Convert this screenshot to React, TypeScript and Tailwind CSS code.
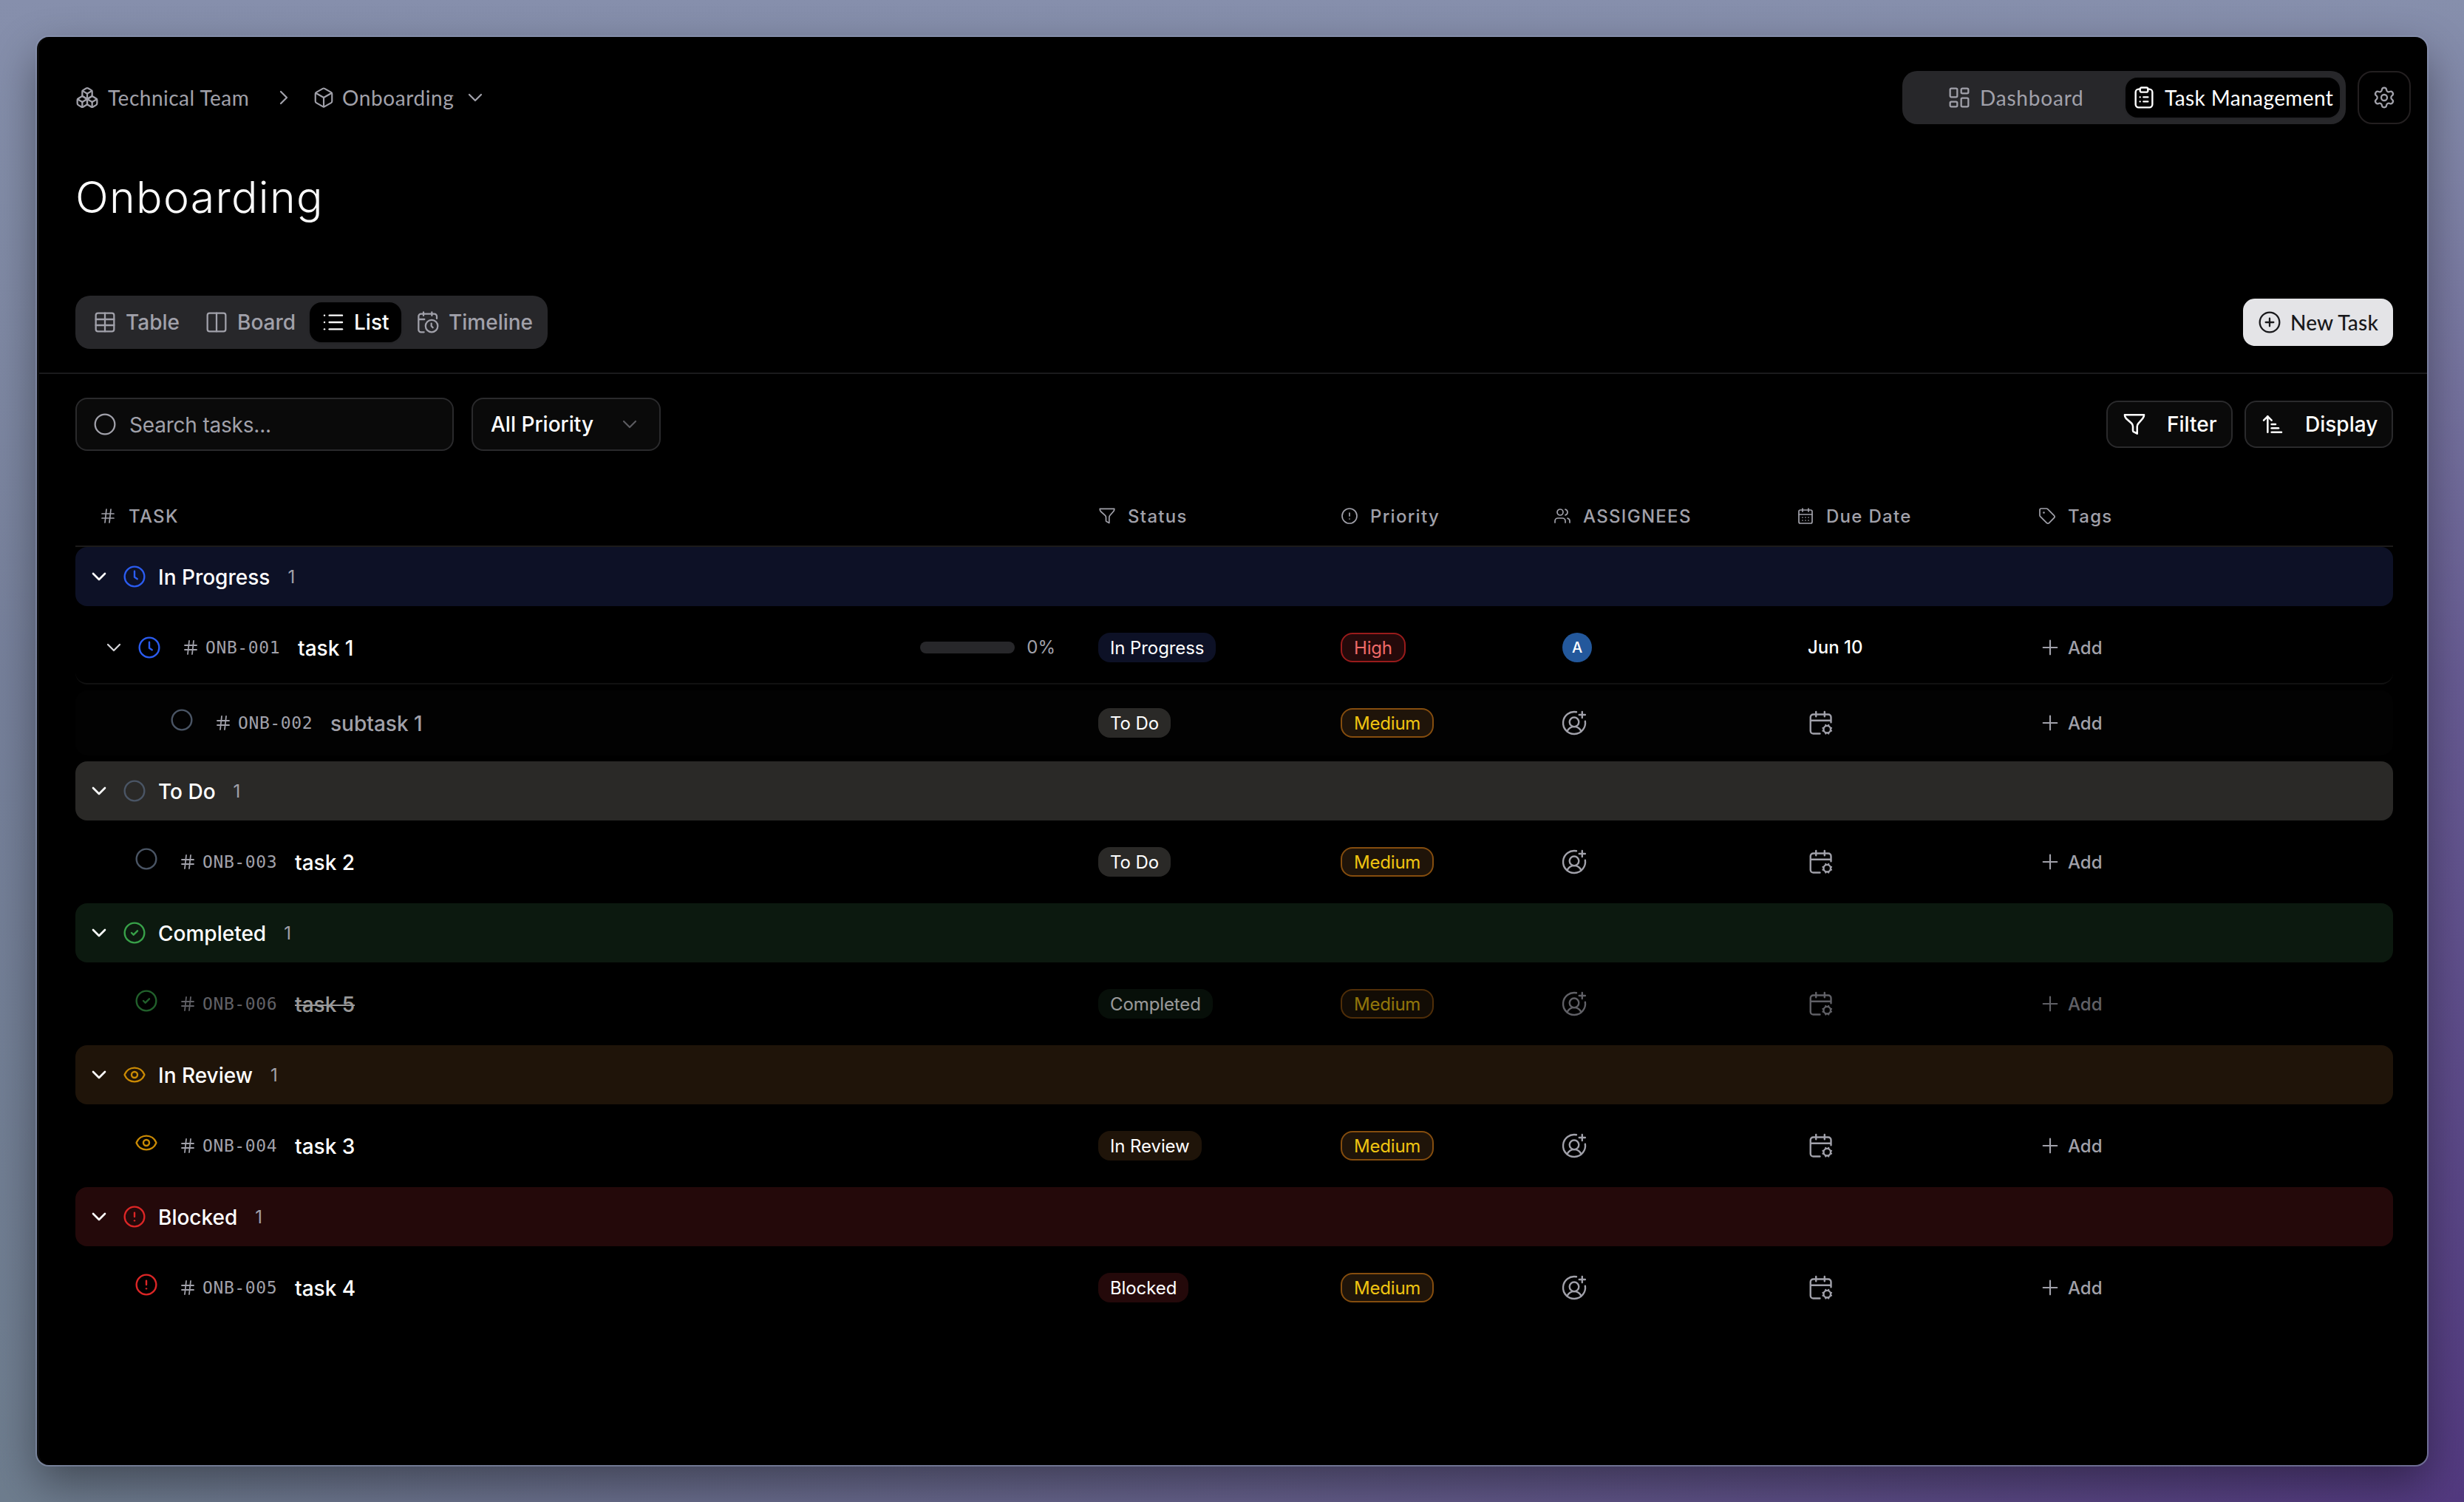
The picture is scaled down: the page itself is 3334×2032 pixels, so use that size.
import React from "react";
import {
  ArrowUpNarrowWide,
  Box,
  Boxes,
  CalendarDays,
  ChevronDown,
  ChevronRight,
  CircleAlert,
  CircleCheck,
  CirclePlus,
  Eye,
  Hash,
  List,
  Plus,
  Settings,
  Tag,
  Users,
} from "lucide-react";

type IconProps = { size?: number; strokeWidth?: number; className?: string };
type IconType = React.ComponentType<IconProps>;

const Svg = ({ size = 32, strokeWidth = 1.7, className, children }: IconProps & { children: React.ReactNode }) => (
  <svg
    width={size}
    height={size}
    viewBox="0 0 24 24"
    fill="none"
    stroke="currentColor"
    strokeWidth={strokeWidth}
    strokeLinecap="round"
    strokeLinejoin="round"
    className={className}
  >
    {children}
  </svg>
);

const DashboardIcon: IconType = (p) => (
  <Svg {...p}>
    <rect x="2.75" y="2.75" width="7.25" height="8.75" rx="1.2" />
    <rect x="14" y="2.75" width="7.25" height="5" rx="1.2" />
    <rect x="2.75" y="16.25" width="7.25" height="5" rx="1.2" />
    <rect x="14" y="12.5" width="7.25" height="8.75" rx="1.2" />
  </Svg>
);

const ClipboardIcon: IconType = (p) => (
  <Svg {...p}>
    <path d="M16 3.5h1.5a3 3 0 0 1 3 3V19a3 3 0 0 1-3 3h-11a3 3 0 0 1-3-3V6.5a3 3 0 0 1 3-3H8" />
    <rect x="8" y="1.9" width="8" height="4.6" rx="1.5" />
    <path d="M8 11.5h.01M11.5 11.5H16M8 16h.01M11.5 16H16" />
  </Svg>
);

const TableIcon: IconType = (p) => (
  <Svg {...p}>
    <rect x="2.75" y="2.75" width="18.5" height="18.5" rx="2.2" />
    <path d="M2.75 9h18.5M2.75 15h18.5M12 2.75v18.5" />
  </Svg>
);

const BoardIcon: IconType = (p) => (
  <Svg {...p}>
    <rect x="2.75" y="2.75" width="18.5" height="18.5" rx="2.2" />
    <path d="M12 2.75v18.5" />
  </Svg>
);

const TimelineIcon: IconType = (p) => (
  <Svg {...p}>
    <path d="M7.5 1.8v3.4M16 1.8v3.4M21 8.2V6a2.5 2.5 0 0 0-2.5-2.5H5A2.5 2.5 0 0 0 2.5 6v13.5A2.5 2.5 0 0 0 5 22h3M2.5 9h6" />
    <circle cx="15.8" cy="15.8" r="6.2" />
    <path d="M15.5 13.2v2.6l1.5 1.6" />
  </Svg>
);

const FunnelIcon: IconType = (p) => (
  <Svg {...p}>
    <path d="M2.2 2.4h19.6c0 1.6-.3 2.4-1.3 3.6l-4.6 5.3c-.9 1-1.1 1.8-1.1 3v7.2l-3.6-1.9c-.5-.3-.7-.7-.7-1.3v-4c0-1.2-.2-2-1.1-3L3.5 6c-1-1.2-1.3-2-1.3-3.6Z" />
  </Svg>
);

const CircleIcon: IconType = (p) => (
  <Svg {...p}>
    <circle cx="12" cy="12" r="10" />
  </Svg>
);

const ClockIcon: IconType = (p) => (
  <Svg {...p}>
    <circle cx="12" cy="12" r="10" />
    <path d="M12 6.5v6l2.8 2" />
  </Svg>
);

const AssignIcon: IconType = (p) => (
  <Svg {...p}>
    <path d="M14 2.2A10 10 0 1 0 21.900 10.500" />
    <path d="M19.200 2v5.400M16.500 4.700h5.400" />
    <circle cx="12" cy="11.200" r="4.200" />
    <path d="M5.600 19.600c1.200-2.600 3.500-4.200 6.400-4.200s5.200 1.600 6.400 4.200" />
  </Svg>
);

const CalendarSettingIcon: IconType = (p) => (
  <Svg {...p}>
    <path d="M7.500 2v4.200M15.200 2v4.200" />
    <path d="M21 11.500V6.800A2.500 2.500 0 0 0 18.500 4.300H5A2.500 2.500 0 0 0 2.500 6.800v12.400A2.500 2.500 0 0 0 5 21.700h6M2.500 9.800H21" />
    <circle cx="17.500" cy="17.800" r="3.200" />
    <path
      d="M16.200 13.900v.4M18.800 13.900v.4M16.200 21.300v.4M18.800 21.300v.4M21.300 16.500v.1M21.300 19.100v.1M13.700 16.500v.1M13.700 19.100v.1"
      strokeWidth="1.500"
    />
  </Svg>
);

type Task = {
  id: string;
  title: string;
  priority: "High" | "Medium";
  date?: string;
  assignee?: string;
  progress?: string;
  subtask?: boolean;
};

type Group = { status: string; bg: string; color: string; icon: IconType; tasks: Task[] };

const groups: Group[] = [
  {
    status: "In Progress",
    bg: "bg-[#0d1126]",
    color: "text-[#2b5cf0]",
    icon: ClockIcon,
    tasks: [
      { id: "ONB-001", title: "task 1", priority: "High", date: "Jun 10", assignee: "A", progress: "0%" },
      { id: "ONB-002", title: "subtask 1", priority: "Medium", subtask: true },
    ],
  },
  {
    status: "To Do",
    bg: "bg-[#2a2927]",
    color: "text-[#4a5565]",
    icon: CircleIcon,
    tasks: [{ id: "ONB-003", title: "task 2", priority: "Medium" }],
  },
  {
    status: "Completed",
    bg: "bg-[#0c190f]",
    color: "text-[#38a149]",
    icon: CircleCheck,
    tasks: [{ id: "ONB-006", title: "task 5", priority: "Medium" }],
  },
  {
    status: "In Review",
    bg: "bg-[#1f1409]",
    color: "text-[#ca8a04]",
    icon: Eye,
    tasks: [{ id: "ONB-004", title: "task 3", priority: "Medium" }],
  },
  {
    status: "Blocked",
    bg: "bg-[#24090a]",
    color: "text-[#dc2626]",
    icon: CircleAlert,
    tasks: [{ id: "ONB-005", title: "task 4", priority: "Medium" }],
  },
];

const COLS = "grid grid-cols-[1384px_328px_288px_329px_327px_1fr] items-center";

const Header = () => (
  <header className="flex h-[72px] items-center justify-between pl-[52px] pr-[22px]">
    <nav className="flex items-center font-[Lato] text-[28px] text-[#a1a1aa]">
      <Boxes size={32} strokeWidth={1.7} />
      <span className="ml-[12px] w-[191px] whitespace-nowrap tracking-[0.5px]">Technical Team</span>
      <ChevronRight size={32} strokeWidth={1.7} className="ml-[31px]" />
      <Box size={30} strokeWidth={1.7} className="ml-[23px]" />
      <span className="ml-[10px] w-[150px] whitespace-nowrap tracking-[0.6px]">Onboarding</span>
      <ChevronDown size={32} strokeWidth={1.7} className="ml-[14px]" />
    </nav>
    <div className="flex items-center gap-4">
      <div className="flex h-[72px] w-[600px] items-center rounded-[20px] bg-[#27272a] pr-2 font-[Lato] text-[28px]">
        <div className="flex flex-1 items-center pl-[61px] text-[#a1a1aa]">
          <DashboardIcon size={32} />
          <span className="ml-[12px] whitespace-nowrap tracking-[0.8px]">Dashboard</span>
        </div>
        <div className="flex h-[54px] w-[290px] items-center rounded-2xl bg-black pl-[9px] text-white shadow-sm">
          <ClipboardIcon size={32} strokeWidth={1.8} />
          <span className="ml-[12px] whitespace-nowrap tracking-[0.4px]">Task Management</span>
        </div>
      </div>
      <button className="flex size-[72px] items-center justify-center rounded-[20px] border-2 border-[#231f20] text-[#a1a1aa]">
        <Settings size={32} strokeWidth={1.7} />
      </button>
    </div>
  </header>
);

const Tabs = () => (
  <div className="flex items-center justify-between pl-[52px] pr-[46px]">
    <div className="flex h-[72px] w-[639px] items-center rounded-[20px] bg-[#27272a] text-[28px] font-[470] text-[#a1a1aa]">
      <div className="flex w-[152px] items-center gap-3 pl-[24px]">
        <TableIcon size={32} />
        Table
      </div>
      <div className="flex w-[165px] items-center gap-3 pl-[23px]">
        <BoardIcon size={32} />
        Board
      </div>
      <div className="flex h-[54px] w-[124px] items-center gap-3 rounded-2xl bg-black pl-4 text-white shadow-sm">
        <List size={32} strokeWidth={1.8} />
        List
      </div>
      <div className="flex items-center gap-3 pl-[20px]">
        <TimelineIcon size={32} />
        Timeline
      </div>
    </div>
    <button className="flex h-16 w-[203px] items-center gap-3 rounded-2xl bg-[#e4e4e7] pl-5 font-[Lato] text-[28px] font-medium text-[#18181b]">
      <CirclePlus size={32} strokeWidth={1.7} />
      <span className="whitespace-nowrap tracking-[0.2px]">New Task</span>
    </button>
  </div>
);

const Toolbar = () => (
  <div className="flex items-center justify-between pl-[52px] pr-[46px] text-[28px]">
    <div className="flex gap-6">
      <div className="flex h-[72px] w-[512px] items-center gap-[17px] rounded-2xl border-2 border-[#2a2a2c] bg-[#0a0a0a] pl-[22px] text-[#a1a1aa]">
        <CircleIcon size={32} />
        <span className="pt-0.5 tracking-[-0.2px]">Search tasks...</span>
      </div>
      <div className="flex h-[72px] w-[256px] items-center justify-between rounded-2xl border-2 border-[#2a2a2c] bg-[#0a0a0a] pl-6 pr-[24px] font-[470] text-white">
        All Priority
        <ChevronDown size={32} strokeWidth={1.6} className="text-[#5b5b60]" />
      </div>
    </div>
    <div className="flex gap-4 font-[480] text-white">
      <button className="flex h-16 w-[171px] items-center gap-7 rounded-2xl border-2 border-[#2a2a2c] bg-[#0a0a0a] pl-5">
        <FunnelIcon size={32} strokeWidth={1.9} />
        Filter
      </button>
      <button className="flex h-16 w-[201px] items-center gap-7 rounded-2xl border-2 border-[#2a2a2c] bg-[#0a0a0a] pl-5">
        <ArrowUpNarrowWide size={32} strokeWidth={1.9} />
        Display
      </button>
    </div>
  </div>
);

const columns: { label: string; icon: IconType }[] = [
  { label: "TASK", icon: Hash },
  { label: "Status", icon: FunnelIcon },
  { label: "Priority", icon: CircleAlert },
  { label: "ASSIGNEES", icon: Users },
  { label: "Due Date", icon: CalendarDays },
  { label: "Tags", icon: Tag },
];

const TableHead = () => (
  <div className={COLS + " h-[82px] border-b-2 border-[#1c1b1a] text-[24px] font-[450] tracking-[1.3px] text-[#a1a1aa]"}>
    {columns.map(({ label, icon: Icon }, i) => (
      <div key={label} className={"flex items-center gap-4" + (i === 0 ? " pl-8" : "")}>
        <Icon size={24} strokeWidth={1.7} />
        <span className="pt-0.5">{label}</span>
      </div>
    ))}
  </div>
);

const PriorityPill = ({ value }: { value: Task["priority"] }) => {
  const tone =
    value === "High"
      ? "border-[#991b1b] bg-[#24090a] text-[#ef6a68]"
      : "border-[#854d0e] bg-[#1f1409] text-[#f0c411]";
  return (
    <span className={"flex h-10 items-center rounded-2xl border-2 px-4 pt-0.5 text-[24px] font-[440] tracking-[-0.2px] " + tone}>
      {value}
    </span>
  );
};

const TaskRow = ({ task, group }: { task: Task; group: Group }) => {
  // subtasks keep their own "To Do" status inside the parent's group
  const look = task.subtask ? groups[1] : group;
  const Icon = look.icon;
  const done = group.status === "Completed";

  let rowClass = "h-[112px]";
  let iconClass = "ml-[80px] mb-2";
  if (task.progress) {
    rowClass = "my-2 h-[98px] rounded-2xl border-b-2 border-[#111111]";
    iconClass = "ml-4";
  }
  if (task.subtask) {
    rowClass = "mb-2 h-[88px] rounded-2xl bg-[#020202]";
    iconClass = "ml-[128px] mb-2";
  }

  return (
    <div className={COLS + " " + rowClass + (done ? " opacity-60" : "")}>
      <div className="flex items-center pr-[58px]">
        {task.progress && <ChevronDown size={32} strokeWidth={1.7} className="ml-9 text-[#d4d4d8]" />}
        <span className={look.color + " " + iconClass}>
          <Icon size={32} strokeWidth={1.8} />
        </span>
        <span className="ml-7 flex items-center text-[#a1a1aa]">
          <Hash size={24} strokeWidth={1.8} />
          <span className="ml-2 w-[125px] font-['DejaVu_Sans_Mono',monospace] text-[23px] tracking-[0.6px]">
            {task.id}
          </span>
        </span>
        <span
          className={
            "pt-0.5 text-[28px] font-[470] " + (task.subtask ? "text-[#a1a1aa]" : "text-white") + (done ? " line-through" : "")
          }
        >
          {task.title}
        </span>
        {task.progress && (
          <span className="ml-auto flex items-center gap-4 text-[24px] text-[#a1a1aa]">
            <span className="h-4 w-32 rounded-full bg-[#27272a]" />
            {task.progress}
          </span>
        )}
      </div>
      <div className="flex">
        <span
          className={
            "flex h-10 items-center rounded-2xl px-4 pt-0.5 text-[24px] font-[440] tracking-[-0.1px] text-white " + look.bg
          }
        >
          {look.status}
        </span>
      </div>
      <div className="flex">
        <PriorityPill value={task.priority} />
      </div>
      <div className="flex pl-[10px]">
        {task.assignee ? (
          <span className="ml-0.5 flex size-10 items-center justify-center rounded-full bg-[#23589c] text-[20px] font-medium text-white">
            {task.assignee}
          </span>
        ) : (
          <AssignIcon size={36} strokeWidth={1.6} className="text-[#a1a1aa]" />
        )}
      </div>
      <div className="pl-[15px]">
        {task.date ? (
          <span className="text-[24px] font-[450] text-white">{task.date}</span>
        ) : (
          <CalendarSettingIcon size={36} strokeWidth={1.6} className="text-[#a1a1aa]" />
        )}
      </div>
      <div className="flex items-center gap-2 text-[24px] font-[450] text-[#a1a1aa]">
        <Plus size={32} strokeWidth={1.6} />
        <span className="pt-0.5">Add</span>
      </div>
    </div>
  );
};

const TaskGroup = ({ group }: { group: Group }) => {
  const Icon = group.icon;
  return (
    <section>
      <div className={"flex h-20 items-center rounded-2xl pl-4 text-white " + group.bg}>
        <ChevronDown size={32} strokeWidth={2} />
        <Icon size={32} strokeWidth={1.8} className={"ml-4 " + group.color} />
        <span className="ml-4 pt-0.5 text-[28px] font-[480]">{group.status}</span>
        <span className="ml-6 pt-0.5 text-[24px] text-[#a1a1aa]">1</span>
      </div>
      {group.tasks.map((task) => (
        <TaskRow key={task.id} task={task} group={group} />
      ))}
    </section>
  );
};

export default function App() {
  return (
    <div className="h-[2032px] w-[3334px] overflow-hidden bg-[linear-gradient(to_bottom,#868fac_0%,rgba(134,143,172,0.85)_12%,rgba(128,132,170,0.45)_45%,rgba(120,120,160,0)_100%),linear-gradient(to_right,#6e7d8e_0%,#645f8a_50%,#52397f_100%)] px-[50px] pt-[50px] font-[Inter,sans-serif]">
      <div className="flex h-[1932px] w-[3234px] flex-col rounded-2xl border-l-[3px] border-[#0b0b0b] bg-black pt-[46px] shadow-[0_0_0_2px_rgba(140,150,180,0.6),0_24px_60px_rgba(0,0,0,0.4)]">
        <div className="-ml-[3px]">
          <Header />
          <h1 className="mt-[64px] h-[72px] pl-[52px] text-[59px] leading-[70px] font-[340] tracking-[1.3px] text-[#fafafa]">
            Onboarding
          </h1>
          <div className="mt-[96px]">
            <Tabs />
          </div>
          <div className="mt-8 ml-[3px] border-b-2 border-[#1a1a1c]" />
          <div className="mt-8">
            <Toolbar />
          </div>
          <div className="mt-12 pl-[52px] pr-[46px]">
            <TableHead />
            {groups.map((group) => (
              <TaskGroup key={group.status} group={group} />
            ))}
          </div>
        </div>
      </div>
    </div>
  );
}
